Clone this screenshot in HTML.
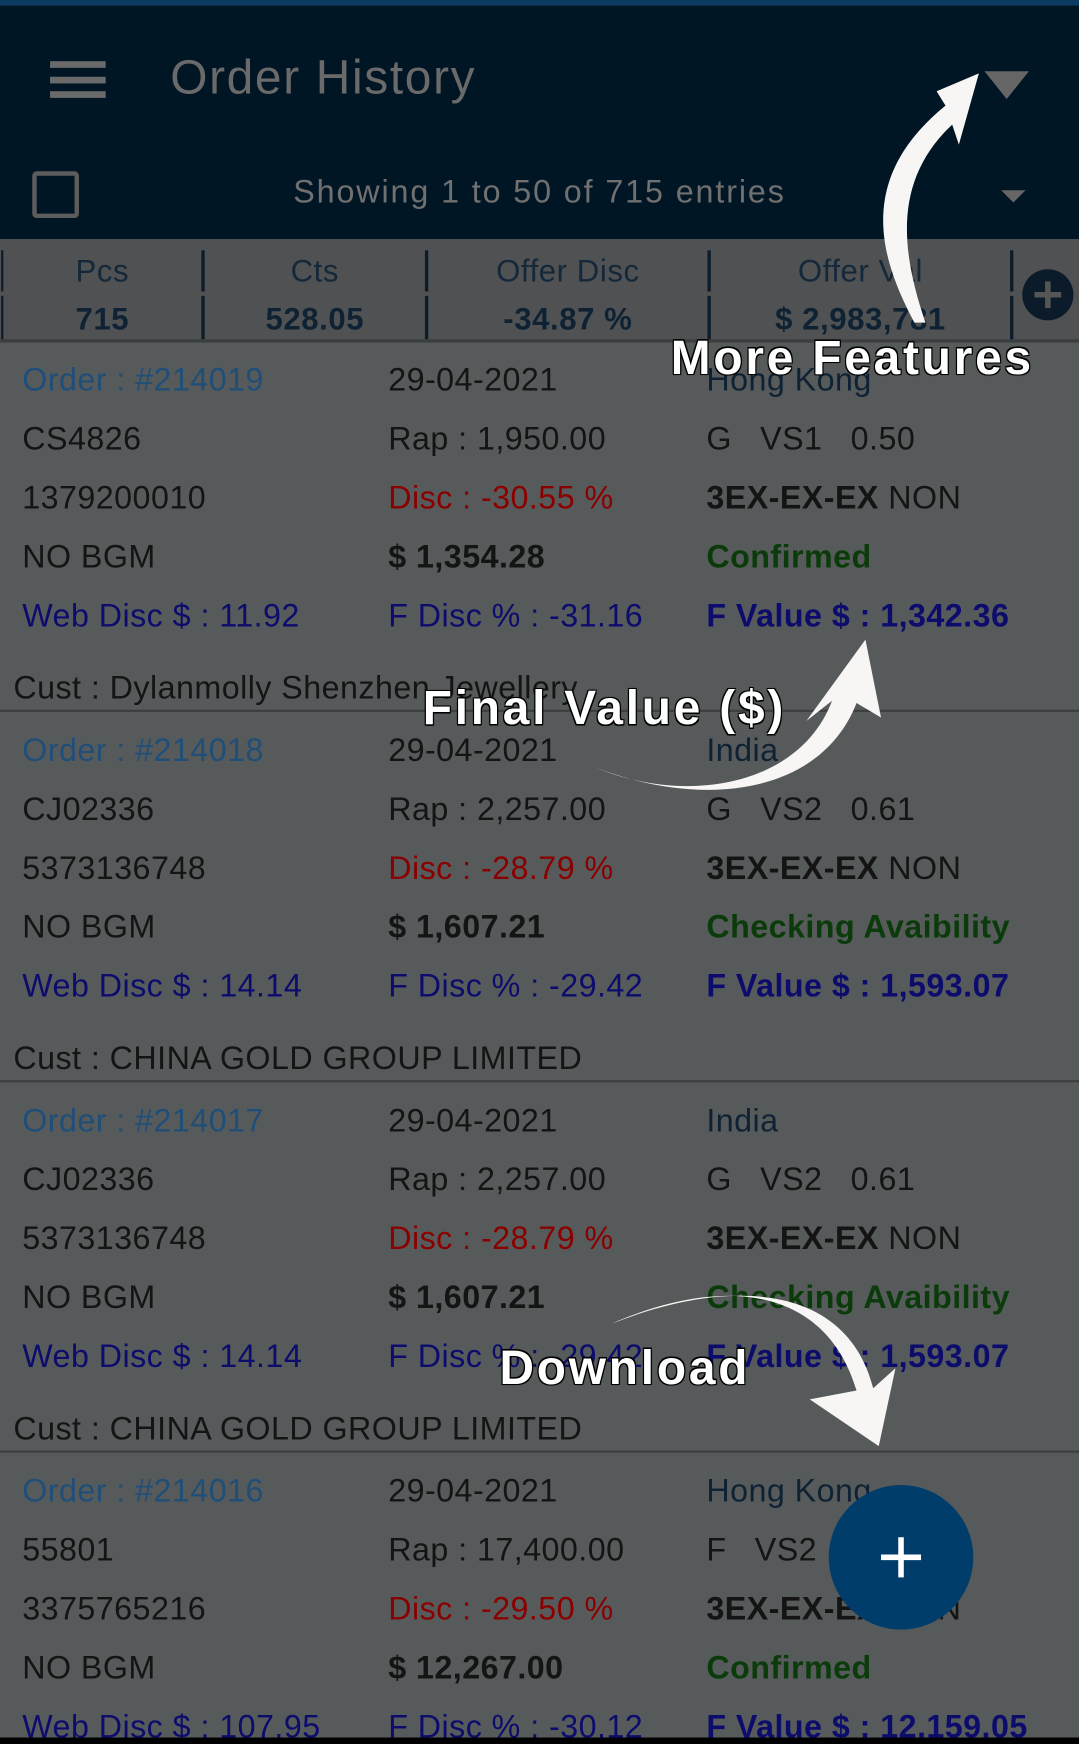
<!DOCTYPE html>
<html><head><meta charset="utf-8"><style>
html,body{margin:0;padding:0;background:#000;overflow:hidden;}
#s{width:970px;height:1568px;position:relative;transform:scale(1.11237);transform-origin:0 0;background:#575a5b;font-family:"Liberation Sans",sans-serif;overflow:hidden;}
.a{position:absolute;white-space:nowrap;}
.t{font-size:29px;letter-spacing:0.4px;color:#141414;line-height:32px;}
.ob{color:#1f4e78}.rd{color:#8a0000}.bl{color:#0c0c6c}.gr{color:#0b3b0b;font-weight:bold}.b{font-weight:bold}
.ann{font-weight:bold;color:#fff;font-size:43px;letter-spacing:2.5px;text-shadow:0 0 2px #000,1px 1px 0 #000,-1px -1px 0 #000,1px -1px 0 #000,-1px 1px 0 #000;}
</style></head><body><div id="s">
<div class="a" style="left:0;top:0;width:970px;height:5px;background:#0b3a63"></div>
<div class="a" style="left:0;top:5px;width:970px;height:210px;background:#011624"></div>
<div class="a" style="left:45px;top:55px;width:50px;height:6px;background:#6a6a6a"></div>
<div class="a" style="left:45px;top:69px;width:50px;height:6px;background:#6a6a6a"></div>
<div class="a" style="left:45px;top:82px;width:50px;height:6px;background:#6a6a6a"></div>
<div class="a" style="left:153px;top:46px;font-size:43px;letter-spacing:1.5px;color:#6a6a6a">Order History</div>
<svg class="a" style="left:883px;top:62px" width="44" height="28"><polygon points="2,2 42,2 22,27" fill="#666"/></svg>
<div class="a" style="left:29px;top:154px;width:34px;height:34px;border:4px solid #5c5c5c;border-radius:4px"></div>
<div class="a" style="left:0;width:970px;text-align:center;top:157px;font-size:29px;letter-spacing:1.7px;color:#707070">Showing 1 to 50 of 715 entries</div>
<svg class="a" style="left:899px;top:170px" width="24" height="14"><polygon points="1,1 23,1 12,12" fill="#666"/></svg>
<div class="a" style="left:0;top:215px;width:970px;height:92px;background:#4f5152"></div>
<div class="a" style="left:0;top:305px;width:970px;height:3px;background:#3c3f41"></div>
<div class="a" style="left:1px;top:225px;width:2px;height:80px;background:#0d1c2a"></div>
<div class="a" style="left:181px;top:225px;width:3px;height:80px;background:#0d1c2a"></div>
<div class="a" style="left:382px;top:225px;width:3px;height:80px;background:#0d1c2a"></div>
<div class="a" style="left:636px;top:225px;width:3px;height:80px;background:#0d1c2a"></div>
<div class="a" style="left:908px;top:225px;width:3px;height:80px;background:#0d1c2a"></div>
<div class="a" style="left:0;top:262px;width:970px;height:4px;background:#4f5152"></div>
<div class="a" style="left:2px;width:180px;text-align:center;top:228px;font-size:28px;letter-spacing:0.5px;color:#14283a">Pcs</div>
<div class="a" style="left:183px;width:200px;text-align:center;top:228px;font-size:28px;letter-spacing:0.5px;color:#14283a">Cts</div>
<div class="a" style="left:384px;width:253px;text-align:center;top:228px;font-size:28px;letter-spacing:0.5px;color:#14283a">Offer Disc</div>
<div class="a" style="left:638px;width:271px;text-align:center;top:228px;font-size:28px;letter-spacing:0.5px;color:#14283a">Offer Val</div>
<div class="a" style="left:2px;width:180px;text-align:center;top:271px;font-size:28px;letter-spacing:0.5px;color:#0f2233;font-weight:bold">715</div>
<div class="a" style="left:183px;width:200px;text-align:center;top:271px;font-size:28px;letter-spacing:0.5px;color:#0f2233;font-weight:bold">528.05</div>
<div class="a" style="left:384px;width:253px;text-align:center;top:271px;font-size:28px;letter-spacing:0.5px;color:#0f2233;font-weight:bold">-34.87 %</div>
<div class="a" style="left:638px;width:271px;text-align:center;top:271px;font-size:28px;letter-spacing:0.5px;color:#0f2233;font-weight:bold">$ 2,983,781</div>
<svg class="a" style="left:918px;top:241px" width="50" height="50"><circle cx="24" cy="24" r="23" fill="#0b1b2a"/><path d="M24 12V36M12 24H36" stroke="#555" stroke-width="5"/></svg>

<!-- block 1 -->
<div class="a t ob" style="left:20px;top:326px">Order : #214019</div>
<div class="a t" style="left:349px;top:326px">29-04-2021</div>
<div class="a t" style="left:635px;top:326px;color:#0f2233">Hong Kong</div>
<div class="a t" style="left:20px;top:379px">CS4826</div>
<div class="a t" style="left:349px;top:379px">Rap : 1,950.00</div>
<div class="a t" style="left:635px;top:379px">G&nbsp;&nbsp;&nbsp;VS1&nbsp;&nbsp;&nbsp;0.50</div>
<div class="a t" style="left:20px;top:432px">1379200010</div>
<div class="a t rd" style="left:349px;top:432px">Disc : -30.55 %</div>
<div class="a t" style="left:635px;top:432px"><b>3EX-EX-EX</b>&nbsp;NON</div>
<div class="a t" style="left:20px;top:485px">NO BGM</div>
<div class="a t b" style="left:349px;top:485px">$ 1,354.28</div>
<div class="a t gr" style="left:635px;top:485px">Confirmed</div>
<div class="a t bl" style="left:20px;top:538px">Web Disc $ : 11.92</div>
<div class="a t bl" style="left:349px;top:538px">F Disc % : -31.16</div>
<div class="a t bl b" style="left:635px;top:538px">F Value $ : 1,342.36</div>
<div class="a t" style="left:12px;top:603px">Cust : Dylanmolly Shenzhen Jewellery</div>
<div class="a" style="left:0;top:638px;width:970px;height:2px;background:#3d3f40"></div>
<!-- block 2 -->
<div class="a t ob" style="left:20px;top:659px">Order : #214018</div>
<div class="a t" style="left:349px;top:659px">29-04-2021</div>
<div class="a t" style="left:635px;top:659px;color:#0f2233">India</div>
<div class="a t" style="left:20px;top:712px">CJ02336</div>
<div class="a t" style="left:349px;top:712px">Rap : 2,257.00</div>
<div class="a t" style="left:635px;top:712px">G&nbsp;&nbsp;&nbsp;VS2&nbsp;&nbsp;&nbsp;0.61</div>
<div class="a t" style="left:20px;top:765px">5373136748</div>
<div class="a t rd" style="left:349px;top:765px">Disc : -28.79 %</div>
<div class="a t" style="left:635px;top:765px"><b>3EX-EX-EX</b>&nbsp;NON</div>
<div class="a t" style="left:20px;top:818px">NO BGM</div>
<div class="a t b" style="left:349px;top:818px">$ 1,607.21</div>
<div class="a t gr" style="left:635px;top:818px">Checking Avaibility</div>
<div class="a t bl" style="left:20px;top:871px">Web Disc $ : 14.14</div>
<div class="a t bl" style="left:349px;top:871px">F Disc % : -29.42</div>
<div class="a t bl b" style="left:635px;top:871px">F Value $ : 1,593.07</div>
<div class="a t" style="left:12px;top:936px">Cust : CHINA GOLD GROUP LIMITED</div>
<div class="a" style="left:0;top:971px;width:970px;height:2px;background:#3d3f40"></div>
<!-- block 3 -->
<div class="a t ob" style="left:20px;top:992px">Order : #214017</div>
<div class="a t" style="left:349px;top:992px">29-04-2021</div>
<div class="a t" style="left:635px;top:992px;color:#0f2233">India</div>
<div class="a t" style="left:20px;top:1045px">CJ02336</div>
<div class="a t" style="left:349px;top:1045px">Rap : 2,257.00</div>
<div class="a t" style="left:635px;top:1045px">G&nbsp;&nbsp;&nbsp;VS2&nbsp;&nbsp;&nbsp;0.61</div>
<div class="a t" style="left:20px;top:1098px">5373136748</div>
<div class="a t rd" style="left:349px;top:1098px">Disc : -28.79 %</div>
<div class="a t" style="left:635px;top:1098px"><b>3EX-EX-EX</b>&nbsp;NON</div>
<div class="a t" style="left:20px;top:1151px">NO BGM</div>
<div class="a t b" style="left:349px;top:1151px">$ 1,607.21</div>
<div class="a t gr" style="left:635px;top:1151px">Checking Avaibility</div>
<div class="a t bl" style="left:20px;top:1204px">Web Disc $ : 14.14</div>
<div class="a t bl" style="left:349px;top:1204px">F Disc % : -29.42</div>
<div class="a t bl b" style="left:635px;top:1204px">F Value $ : 1,593.07</div>
<div class="a t" style="left:12px;top:1269px">Cust : CHINA GOLD GROUP LIMITED</div>
<div class="a" style="left:0;top:1304px;width:970px;height:2px;background:#3d3f40"></div>
<!-- block 4 -->
<div class="a t ob" style="left:20px;top:1325px">Order : #214016</div>
<div class="a t" style="left:349px;top:1325px">29-04-2021</div>
<div class="a t" style="left:635px;top:1325px;color:#0f2233">Hong Kong</div>
<div class="a t" style="left:20px;top:1378px">55801</div>
<div class="a t" style="left:349px;top:1378px">Rap : 17,400.00</div>
<div class="a t" style="left:635px;top:1378px">F&nbsp;&nbsp;&nbsp;VS2</div>
<div class="a t" style="left:20px;top:1431px">3375765216</div>
<div class="a t rd" style="left:349px;top:1431px">Disc : -29.50 %</div>
<div class="a t" style="left:635px;top:1431px"><b>3EX-EX-EX</b>&nbsp;NON</div>
<div class="a t" style="left:20px;top:1484px">NO BGM</div>
<div class="a t b" style="left:349px;top:1484px">$ 12,267.00</div>
<div class="a t gr" style="left:635px;top:1484px">Confirmed</div>
<div class="a t bl" style="left:20px;top:1537px">Web Disc $ : 107.95</div>
<div class="a t bl" style="left:349px;top:1537px">F Disc % : -30.12</div>
<div class="a t bl b" style="left:635px;top:1537px">F Value $ : 12,159.05</div>
<div class="a" style="left:0;top:1562px;width:970px;height:6px;background:#000"></div>

<svg class="a" style="left:744px;top:1334px" width="134" height="134"><circle cx="66" cy="66" r="65" fill="#003d6a"/><path d="M66 48V84M48 66H84" stroke="#fff" stroke-width="5"/></svg>

<svg class="a" style="left:0;top:0" width="970" height="1568">
<g fill="#f8f6f5">
<path d="M822 290 C790 230 770 160 850 95 L842 82 L880 66 L862 130 L856 112 C805 160 808 220 832 290 Z"/>
<path d="M535 690 C620 725 720 705 748 630 L725 648 L778 575 L792 645 L770 632 C740 710 640 730 535 690 Z"/>
<path d="M550 1190 C640 1150 740 1150 770 1250 L728 1258 L790 1300 L805 1230 L785 1248 C760 1150 650 1150 550 1190 Z"/>
</g>
</svg>
<div class="a ann" style="left:603px;top:298px">More Features</div>
<div class="a ann" style="left:380px;top:613px">Final Value ($)</div>
<div class="a ann" style="left:449px;top:1206px">Download</div>
</div></body></html>
